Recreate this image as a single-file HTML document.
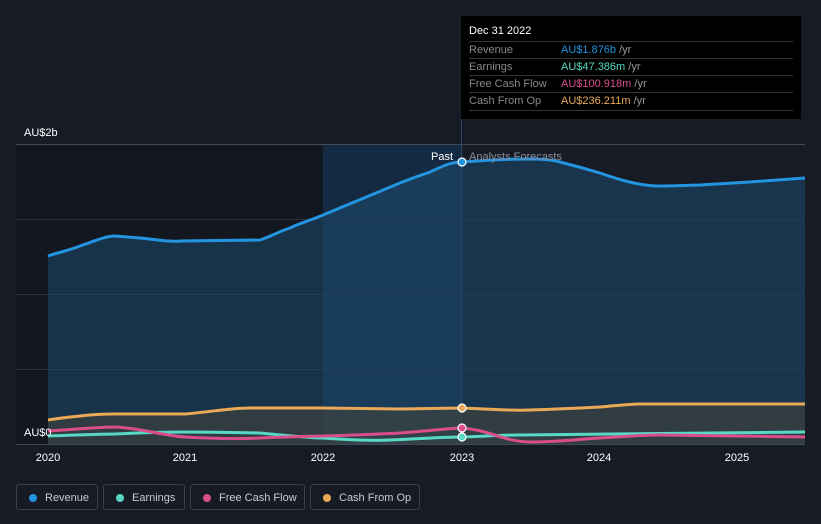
<!DOCTYPE html>
<html><head><meta charset="utf-8"><style>
body{margin:0;background:#161b26;width:821px;height:524px;overflow:hidden;font-family:"Liberation Sans",sans-serif;}
.tt{position:absolute;left:461px;top:16px;width:340px;height:103px;background:#000;}
.tt .h{position:absolute;left:8px;top:9px;color:#fff;font-size:11px;}
.row{position:absolute;left:8px;width:324px;height:17px;border-top:1px solid #333;font-size:11px;color:#888;line-height:17px;}
.row span{position:absolute;left:92px;}
.row i{font-style:normal;color:#999;}
.leg{position:absolute;top:484px;height:26px;border:1px solid #3a3f4a;border-radius:3px;color:#ccc;font-size:11px;line-height:26px;box-sizing:border-box;}
.leg b{position:absolute;top:9px;width:8px;height:8px;border-radius:50%;}
</style></head><body>
<svg width="821" height="524" style="position:absolute;left:0;top:0">
<rect x="16" y="144" width="307" height="300" fill="#131720"/>
<rect x="323" y="144" width="139" height="300" fill="#142a42"/>
<g stroke="#2c313b" stroke-width="1">
<line x1="16" y1="144.5" x2="805" y2="144.5" stroke="#444a55"/>
<line x1="16" y1="219.5" x2="805" y2="219.5"/>
<line x1="16" y1="294.5" x2="805" y2="294.5"/>
<line x1="16" y1="369.5" x2="805" y2="369.5"/>
<line x1="16" y1="444.5" x2="805" y2="444.5" stroke="#444a55"/>
</g>
<line x1="461.5" y1="15" x2="461.5" y2="444" stroke="#2a4666"/>
<path d="M48,256 C60,252 70,250 80,246 C95,241 105,236 115,236 L140,238 C160,240 170,242 180,241 L260,240 C272,236 280,231 290,228 C300,223 312,220 323,215 L400,183 C415,177 425,174 430,172 C445,165 452,162 462,162 C490,160 510,159 530,159 C545,159 553,160 560,162 C580,167 590,170 600,173 C620,180 640,186 660,186 C680,186 690,185 700,185 L750,182 L805,178 L805,444 L48,444Z" fill="#1c4a6e" fill-opacity="0.55"/>
<path d="M48,420 C60,418 70,417 80,416 C95,414 105,414 115,414 L185,414 C210,412 230,408 250,408 L323,408 L400,409 L462,408 C490,409 510,411 530,410 C560,409 580,408 600,407 C620,405 630,404 640,404 L805,404 L805,444 L48,444Z" fill="#4a4536" fill-opacity="0.5"/>
<path d="M48,256 C60,252 70,250 80,246 C95,241 105,236 115,236 L140,238 C160,240 170,242 180,241 L260,240 C272,236 280,231 290,228 C300,223 312,220 323,215 L400,183 C415,177 425,174 430,172 C445,165 452,162 462,162 C490,160 510,159 530,159 C545,159 553,160 560,162 C580,167 590,170 600,173 C620,180 640,186 660,186 C680,186 690,185 700,185 L750,182 L805,178" fill="none" stroke="#2394df" stroke-width="3"/>
<path d="M48,420 C60,418 70,417 80,416 C95,414 105,414 115,414 L185,414 C210,412 230,408 250,408 L323,408 L400,409 L462,408 C490,409 510,411 530,410 C560,409 580,408 600,407 C620,405 630,404 640,404 L805,404" fill="none" stroke="#e9a957" stroke-width="3"/>
<path d="M48,436 C80,435 100,434 115,434 C150,432 170,432 185,432 C230,432 250,433 260,433 C290,436 310,438 323,438 C350,440 370,441 390,440 C420,439 440,437 462,437 C490,436 500,435 520,435 L805,432" fill="none" stroke="#58d9c6" stroke-width="3"/>
<path d="M48,431 C80,429 100,427 115,427 C140,428 165,436 185,437 C220,439 240,439 260,438 C290,437 310,436 323,436 C360,435 380,434 400,433 C430,431 450,428 462,428 C490,430 505,442 530,442 C560,442 580,439 600,438 C630,436 645,435 660,435 L805,437" fill="none" stroke="#d94e8a" stroke-width="3"/>
<circle cx="462" cy="162" r="4" fill="#2394df" stroke="#fff" stroke-width="1.2"/>
<circle cx="462" cy="408" r="4" fill="#e9a957" stroke="#fff" stroke-width="1.2"/>
<circle cx="462" cy="428" r="4" fill="#d94e8a" stroke="#fff" stroke-width="1.2"/>
<circle cx="462" cy="437" r="4" fill="#58d9c6" stroke="#fff" stroke-width="1.2"/>
<g font-size="11" font-family="Liberation Sans,sans-serif">
<text x="24" y="136" fill="#fff">AU$2b</text>
<text x="24" y="436" fill="#fff">AU$0</text>
<text x="453" y="160" fill="#fff" text-anchor="end">Past</text>
<text x="469" y="160" fill="#8a8f99">Analysts Forecasts</text>
<g fill="#fff" text-anchor="middle">
<text x="48" y="461">2020</text><text x="185" y="461">2021</text><text x="323" y="461">2022</text><text x="462" y="461">2023</text><text x="599" y="461">2024</text><text x="737" y="461">2025</text>
</g></g>
</svg>
<div class="tt"><div class="h">Dec 31 2022</div>
<div class="row" style="top:25px">Revenue<span style="color:#2394df">AU$1.876b <i>/yr</i></span></div>
<div class="row" style="top:42px">Earnings<span style="color:#58d9c6">AU$47.386m <i>/yr</i></span></div>
<div class="row" style="top:59px">Free Cash Flow<span style="color:#d94e8a">AU$100.918m <i>/yr</i></span></div>
<div class="row" style="top:76px;border-bottom:1px solid #333">Cash From Op<span style="color:#e9a957">AU$236.211m <i>/yr</i></span></div>
</div>
<div class="leg" style="left:16px;width:82px"><b style="left:12px;background:#2394df"></b><span style="position:absolute;left:28px">Revenue</span></div>
<div class="leg" style="left:103px;width:82px"><b style="left:12px;background:#58d9c6"></b><span style="position:absolute;left:28px">Earnings</span></div>
<div class="leg" style="left:190px;width:115px"><b style="left:12px;background:#d94e8a"></b><span style="position:absolute;left:28px">Free Cash Flow</span></div>
<div class="leg" style="left:310px;width:110px"><b style="left:12px;background:#e9a957"></b><span style="position:absolute;left:28px">Cash From Op</span></div>
</body></html>
